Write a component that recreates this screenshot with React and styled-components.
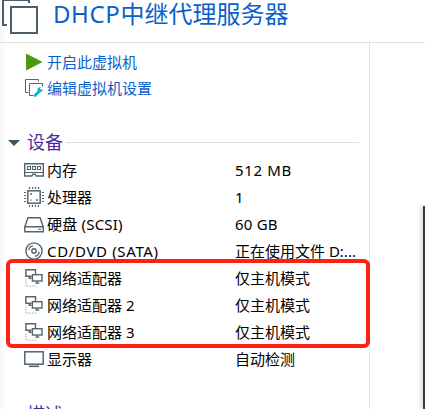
import React from 'react';
import styled, { createGlobalStyle } from 'styled-components';

const Global = createGlobalStyle`
  * { box-sizing: border-box; }
  body {
    margin: 0;
    background: #fff;
    font-family: "Noto Sans", "Noto Sans CJK SC", sans-serif;
    overflow: hidden;
  }
  svg { display: block; flex: none; overflow: visible; }
`;

const Window = styled.div`
  position: relative;
  display: flex;
  flex-direction: column;
  width: 425px;
  height: 409px;
  overflow: hidden;
  background: linear-gradient(90deg, #f7f7f7, #fff 6px);
`;

const Header = styled.header`
  display: flex;
  flex: none;
  height: 43px;
  border-bottom: 1px solid #dfdfdf;
`;

const Title = styled.h1`
  margin: 0 0 0 13px;
  font-size: 24px;
  font-weight: 400;
  line-height: 27px;
  color: #0a5fcb;
  white-space: nowrap;
`;

const TitleLatin = styled.span`
  letter-spacing: 0.6px;
`;

const Body = styled.div`
  display: flex;
  flex: 1;
  min-height: 0;
`;

const Sidebar = styled.aside`
  width: 370px;
  border-right: 1px solid #dfdfdf;
  padding-top: 6px;
`;

const Preview = styled.main`
  display: flex;
  flex: 1;
  justify-content: flex-end;
  padding-top: 163px;
  overflow: hidden;
`;

const Screen = styled.div`
  width: 2px;
  background: #3c3c3a;
  box-shadow: 0 0 5px rgba(0, 0, 0, 0.45);
`;

const Command = styled.a`
  display: flex;
  align-items: center;
  height: 26px;
  padding-left: 25px;
  font-size: 15px;
  line-height: 26px;
  color: #0a5fcb;
`;

const CommandIcon = styled.span`
  width: 22px;
`;

const Section = styled.div`
  display: flex;
  align-items: center;
  height: 29px;
  margin-top: 27px;
  padding: 0 10px 0 8px;
  font-size: 18px;
  line-height: 29px;
  color: #4a2ba0;
`;

const SectionName = styled.span`
  margin: 0 3px 0 7px;
`;

const Rule = styled.span`
  flex: 1;
  height: 1px;
  background: #dfdfdf;
`;

const Device = styled.div`
  display: grid;
  grid-template-columns: 23px 188px 1fr;
  align-items: start;
  height: 27px;
  padding-left: 24px;
  font-size: 15px;
  line-height: 27px;
  color: #000;
  white-space: nowrap;
`;

const IconSlot = styled.span`
  padding-top: ${(p) => p.$drop}px;
`;

const Text = styled.span`
  letter-spacing: ${(p) => p.$tracking || 0}px;
`;

const Highlight = styled.div`
  position: absolute;
  left: 6px;
  top: 259px;
  width: 364px;
  height: 89px;
  border: 4.5px solid #ff2015;
  border-radius: 6px;
`;

const ink = '#52656f';

const MachineIcon = () => (
  <svg width="40" height="36" fill="none" stroke="#4b5f6b" strokeWidth="2">
    <path d="M7 25H3V0H29V3" />
    <rect x="11" y="7" width="26" height="26" />
  </svg>
);

const PlayIcon = () => (
  <svg width="19" height="18">
    <path d="M1 .5L17.5 9L1 17.5Z" fill="#4c9a0c" />
  </svg>
);

const SettingsIcon = () => (
  <svg width="19" height="20" fill="none" stroke={ink}>
    <path d="M3.5 14.5H.5V1.5H13.5V3.5" />
    <path d="M8.5 17.5H4.5V5.5H17.5V8.5" />
    <path d="M10 17.5L15 12.5" stroke="#08b5d4" strokeWidth="2.7" strokeLinecap="round" />
    <path d="M16 9C12.5 9 12 12 13 13.5C15 15 18 14 17.6 11L15.5 12.3L14.6 11.2Z" fill="#08b5d4" stroke="none" />
  </svg>
);

const shapes = {
  memory: (
    <>
      <path d="M.7 4.7H19.3V17H12.2L11.2 15.3H8.8L7.8 17H.7Z" strokeWidth="1.4" />
      <path d="M3.5 7.5H6.5V10.5H3.5ZM8.5 7.5H11.5V10.5H8.5ZM13.5 7.5H16.5V10.5H13.5ZM1 13.5H19" strokeWidth="1.1" />
    </>
  ),
  cpu: (
    <>
      <rect x="3.8" y="3.8" width="12.4" height="12.4" strokeWidth="1.5" />
      <path d="M5.5 0V2M8.5 0V2M11.5 0V2M14.5 0V2M5.5 18V20M8.5 18V20M11.5 18V20M14.5 18V20M0 5.5H2M0 8.5H2M0 11.5H2M0 14.5H2M18 5.5H20M18 8.5H20M18 11.5H20M18 14.5H20" strokeWidth="1.2" />
      <path d="M6 7H8M12 13H14M6.5 13H7.5" strokeWidth="1.6" />
    </>
  ),
  disk: (
    <>
      <path d="M.8 11.7L4 2.7H16L19.2 11.7V16.8H.8ZM.8 11.7H19.2" strokeWidth="1.4" />
      <path d="M14.5 14.3H17" strokeWidth="1.2" />
    </>
  ),
  disc: (
    <>
      <circle cx="10" cy="10" r="8.1" strokeWidth="1.4" />
      <circle cx="10" cy="10" r="2.2" strokeWidth="1.4" />
      <path d="M4.8 9.3C5 7 6.8 5 9.1 4.8M15.2 10.7C15 13 13.2 15 10.9 15.2" strokeWidth="1.3" />
    </>
  ),
  network: (
    <>
      <path d="M7.5 9.3H1.9V2.7H11.5V7M4.5 11.3H7.5M6 9.5V11.5" strokeWidth="1.4" />
      <rect x="8.4" y="7.7" width="9.6" height="6.3" strokeWidth="1.4" />
      <path d="M13.2 14V16M11.3 16.2H15.3" strokeWidth="1.3" />
      <path d="M2 12.5V19.1H13" strokeWidth="1" strokeDasharray="1.2 1.4" opacity=".65" />
    </>
  ),
  display: (
    <>
      <rect x=".8" y="2.8" width="18.4" height="12.4" strokeWidth="1.5" />
      <path d="M5 17.3H15" strokeWidth="1.6" />
    </>
  ),
};

const drops = { memory: 2, cpu: 3, disk: 3.5, disc: 2.5, network: 2, display: 3 };

const DeviceIcon = ({ kind }) => (
  <IconSlot $drop={drops[kind]}>
    <svg width="20" height="20" fill="none" stroke={ink}>{shapes[kind]}</svg>
  </IconSlot>
);

const Caret = () => (
  <svg width="12" height="8"><path d="M0 1H12L6 7Z" fill="#3f5660" /></svg>
);

const devices = [
  { kind: 'memory', name: '内存', value: '512 MB', valueTracking: 0.65 },
  { kind: 'cpu', name: '处理器', value: '1' },
  { kind: 'disk', name: '硬盘 (SCSI)', nameTracking: 0.2, value: '60 GB', valueTracking: 0.2 },
  { kind: 'disc', name: 'CD/DVD (SATA)', nameTracking: 0.65, value: '正在使用文件 D:...' },
  { kind: 'network', name: '网络适配器', value: '仅主机模式' },
  { kind: 'network', name: '网络适配器 2', value: '仅主机模式' },
  { kind: 'network', name: '网络适配器 3', value: '仅主机模式' },
  { kind: 'display', name: '显示器', value: '自动检测' },
];

export default function App() {
  return (
    <>
      <Global />
      <Window>
        <Header>
          <MachineIcon />
          <Title><TitleLatin>DHCP</TitleLatin>中继代理服务器</Title>
        </Header>
        <Body>
          <Sidebar>
            <Command><CommandIcon><PlayIcon /></CommandIcon>开启此虚拟机</Command>
            <Command><CommandIcon><SettingsIcon /></CommandIcon>编辑虚拟机设置</Command>
            <Section><Caret /><SectionName>设备</SectionName><Rule /></Section>
            {devices.map((d) => (
              <Device key={d.name}>
                <DeviceIcon kind={d.kind} />
                <Text $tracking={d.nameTracking}>{d.name}</Text>
                <Text $tracking={d.valueTracking}>{d.value}</Text>
              </Device>
            ))}
            <Section><Caret /><SectionName>描述</SectionName><Rule /></Section>
          </Sidebar>
          <Preview><Screen /></Preview>
        </Body>
        <Highlight />
      </Window>
    </>
  );
}
